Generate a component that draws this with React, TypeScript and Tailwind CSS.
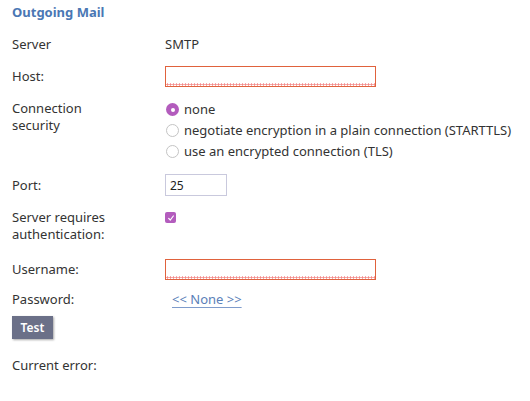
import React from "react"

function Radio({ checked }: { checked?: boolean }) {
  return checked ? (
    <span className="w-[13px] h-[13px] rounded-full bg-[#b35cbd] flex items-center justify-center shrink-0">
      <span className="w-[4px] h-[4px] rounded-full bg-white"></span>
    </span>
  ) : (
    <span className="w-[13px] h-[13px] rounded-full border border-[#c4c4c4] bg-white shrink-0"></span>
  )
}

function ErrorInput() {
  return (
    <div className="relative w-[211px] h-[21px] border border-[#e0623d] bg-white">
      <div className="absolute left-0 right-0 bottom-0 h-[3px] bg-[radial-gradient(circle,#f28b8b_0.9px,transparent_1.3px)] bg-[length:3px_3px]"></div>
    </div>
  )
}

export default function App() {
  const row = "grid grid-cols-[153px_1fr] items-center"
  return (
    <div className="w-[530px] h-[401px] bg-white pl-3 pt-[3px] text-[13px] leading-[17px] text-[#333333] font-['Noto_Sans',sans-serif]">
      <h2 className="font-bold text-[13px] leading-[18px] text-[#4a77b4]">Outgoing Mail</h2>

      <div className={`${row} mt-[13px] h-[20px]`}>
        <span>Server</span>
        <span>SMTP</span>
      </div>

      <div className={`${row} mt-[12px]`}>
        <span>Host:</span>
        <ErrorInput />
      </div>

      <div className="grid grid-cols-[153px_1fr] items-start mt-[13px]">
        <span>
          Connection
          <br />
          security
        </span>
        <div className="flex flex-col gap-[4px] pt-[1px]">
          <label className="flex items-center gap-[5px] h-[17px] pl-[1px]">
            <Radio checked />
            <span>none</span>
          </label>
          <label className="flex items-center gap-[5px] h-[17px] pl-[1px]">
            <Radio />
            <span>negotiate encryption in a plain connection (STARTTLS)</span>
          </label>
          <label className="flex items-center gap-[5px] h-[17px] pl-[1px]">
            <Radio />
            <span>use an encrypted connection (TLS)</span>
          </label>
        </div>
      </div>

      <div className={`${row} mt-[14px]`}>
        <span>Port:</span>
        <div className="w-[62px] h-[22px] border border-[#c9c9dd] bg-white pl-[4px] flex items-center text-[12px] text-[#222]">
          25
        </div>
      </div>

      <div className="grid grid-cols-[153px_1fr] items-start mt-[13px]">
        <span>
          Server requires
          <br />
          authentication:
        </span>
        <span className="w-[11px] h-[11px] rounded-[2px] bg-[#b35cbd] flex items-center justify-center mt-[3px]">
          <svg viewBox="0 0 12 12" className="w-[8px] h-[8px]" fill="none" stroke="white" strokeWidth="1.8" strokeLinecap="round" strokeLinejoin="round">
            <path d="M2.5 6.5 L5 9 L9.5 3" />
          </svg>
        </span>
      </div>

      <div className={`${row} mt-[16px]`}>
        <span>Username:</span>
        <ErrorInput />
      </div>

      <div className={`${row} mt-[11px]`}>
        <span>Password:</span>
        <a className="pl-[7px] text-[#5a80b8] underline underline-offset-[3px] decoration-[#7f9ccc]">&lt;&lt; None &gt;&gt;</a>
      </div>

      <button className="mt-[8px] w-[41px] h-[23px] bg-[#6b7088] text-white text-[12px] font-semibold shadow-[1px_1px_2px_rgba(0,0,0,0.35)] flex items-center justify-center">
        Test
      </button>

      <div className="mt-[18px]">Current error:</div>
    </div>
  )
}
